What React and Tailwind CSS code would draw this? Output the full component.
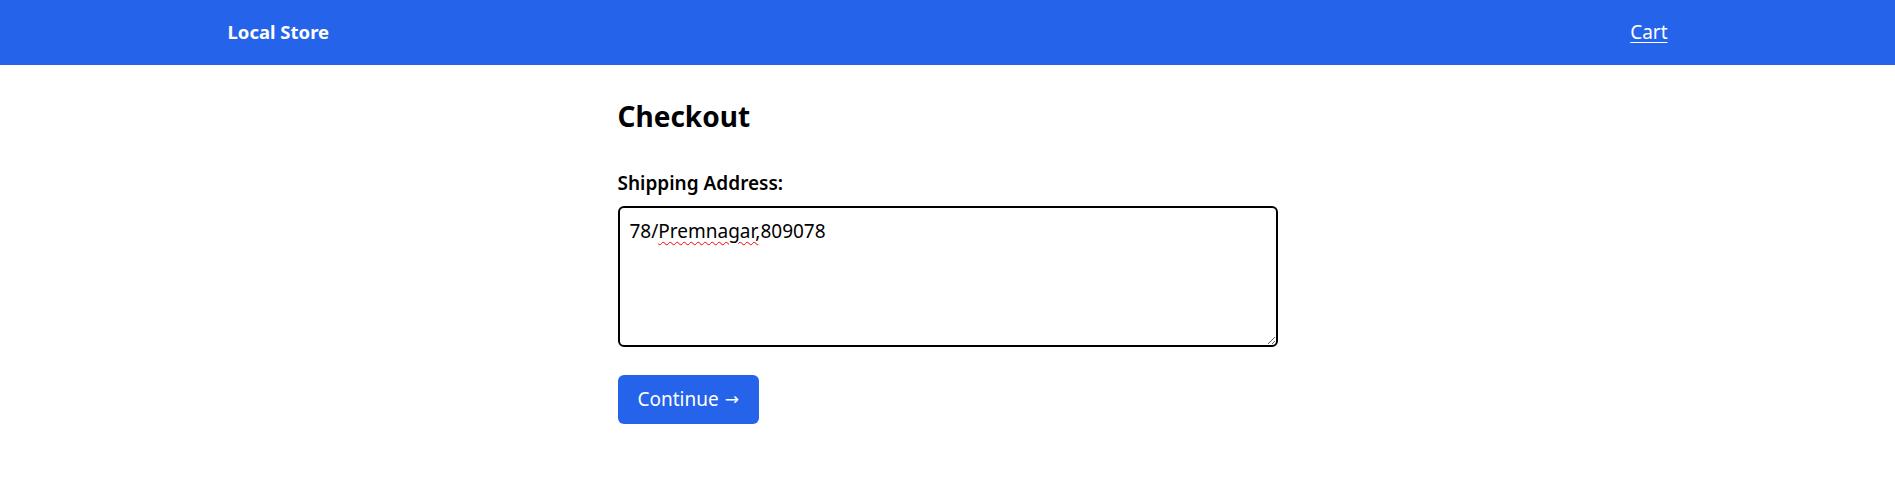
import React from "react";

export default function App() {
  const font = { fontFamily: '"Noto Sans", "Open Sans", sans-serif' };
  return (
    <div className="min-h-[480px] bg-white text-black" style={font}>
      <header className="h-[65px] bg-[#2563eb] text-white">
        <div className="mx-auto flex h-full max-w-[1440px] items-center justify-between">
          <span className="text-[18.5px] font-bold leading-none">Local Store</span>
          <a href="#" className="text-[19px] leading-none underline underline-offset-[3px]">Cart</a>
        </div>
      </header>
      <main className="mx-auto w-[660px] pt-[35px]">
        <h1 className="text-[28px] font-bold leading-[1.2]">Checkout</h1>
        <label className="mt-[37px] block text-[19px] font-semibold leading-[1.3]">Shipping Address:</label>
        <div className="relative mt-[11px]">
          <textarea
            className="block h-[141px] w-full rounded-md border-2 border-black px-[10px] py-[9px] text-[19px] leading-[1.55] outline-none"
            style={font}
            defaultValue="78/Premnagar,809078"
          />
          <div className="pointer-events-none absolute left-0 top-0 px-[12px] py-[11px] text-[19px] leading-[1.55] text-transparent">
            78/<span className="underline decoration-[#ff0000] decoration-wavy decoration-1 underline-offset-[3px]">Premnagar</span>
          </div>
        </div>
        <button className="mt-[28px] flex h-[49px] items-center gap-[6px] rounded-md bg-[#2563eb] px-[20px] text-[19px] leading-none text-white">
          <span>Continue</span>
          <span className="text-[17px]" style={{ fontFamily: '"DejaVu Sans", sans-serif' }}>→</span>
        </button>
      </main>
    </div>
  );
}
